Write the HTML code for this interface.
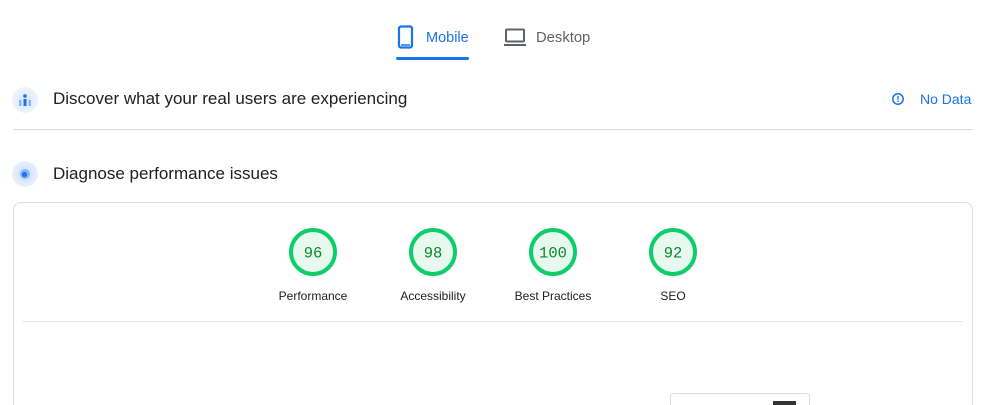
<!DOCTYPE html>
<html><head><style>
*{margin:0;padding:0;box-sizing:border-box}
html,body{width:993px;height:405px;overflow:hidden}
body{background:#fff;font-family:"Liberation Sans",Arial,sans-serif;position:relative}
#w{position:absolute;left:0;top:0;width:993px;height:405px;overflow:hidden}
.abs{position:absolute}
.t{font-size:17px;color:#202124}
.lbl{position:absolute;font-size:12px;color:#212121;width:120px;text-align:center}
</style></head><body><div id="w">
<svg class="abs" style="left:397px;top:25px" width="18" height="24" viewBox="0 0 18 24"><rect x="2" y="1.5" width="13" height="21" rx="2" fill="none" stroke="#1a73e8" stroke-width="2.2"/><line x1="4" y1="20" x2="13" y2="20" stroke="#1a73e8" stroke-width="1.5"/></svg>
<div class="abs" style="left:426px;top:30px;font-size:14.5px;color:#1a73e8">Mobile</div>
<div class="abs" style="left:396px;top:57px;width:73px;height:3px;background:#1a73e8;border-radius:2px"></div>
<svg class="abs" style="left:504px;top:28px" width="24" height="20" viewBox="0 0 24 20"><rect x="2" y="1.5" width="18" height="12" rx="1" fill="none" stroke="#5f6368" stroke-width="2"/><rect x="0" y="16" width="22" height="2" fill="#5f6368"/></svg>
<div class="abs" style="left:536px;top:30px;font-size:14.8px;color:#5f6368">Desktop</div>

<div class="abs" style="left:12px;top:87px;width:26px;height:26px;border-radius:50%;background:radial-gradient(#d6e6fb,#eef4fd 70%,#fff)"></div>
<svg class="abs" style="left:17px;top:93px" width="16" height="14" viewBox="0 0 16 14"><circle cx="8" cy="3" r="1.8" fill="#1a73e8"/><rect x="6.5" y="6" width="3" height="7" fill="#1a73e8"/><rect x="2" y="7" width="2.5" height="6" fill="#8ab4f8"/><rect x="11.5" y="7" width="2.5" height="6" fill="#8ab4f8"/></svg>
<div class="abs t" style="left:53px;top:89px">Discover what your real users are experiencing</div>
<svg class="abs" style="left:891px;top:92px" width="14" height="14" viewBox="0 0 14 14"><circle cx="7" cy="7" r="5.2" fill="none" stroke="#1a73e8" stroke-width="1.5"/><rect x="6.3" y="4" width="1.4" height="3.6" fill="#1a73e8"/><rect x="6.3" y="8.6" width="1.4" height="1.4" fill="#1a73e8"/></svg>
<div class="abs" style="left:920px;top:91px;font-size:14px;color:#1a73e8">No Data</div>
<div class="abs" style="left:13px;top:129px;width:960px;height:1px;background:#dadce0"></div>

<div class="abs" style="left:12px;top:161px;width:26px;height:26px;border-radius:50%;background:radial-gradient(#c5dafa,#eaf1fd 70%,#fff)"></div>
<svg class="abs" style="left:17px;top:166px" width="16" height="16" viewBox="0 0 16 16"><circle cx="8" cy="8" r="5" fill="#8ab4f8"/><circle cx="7.5" cy="8.5" r="2.6" fill="#1a73e8"/></svg>
<div class="abs t" style="left:53px;top:164px">Diagnose performance issues</div>

<div class="abs" style="left:13px;top:202px;width:960px;height:240px;border:1px solid #dadce0;border-radius:8px"></div>
<div class="abs" style="left:22px;top:321px;width:941px;height:1px;background:#e6e6e6"></div>
<div class="abs" style="left:670px;top:393px;width:140px;height:30px;border:1px solid #dadce0;border-radius:3px"></div>
<div class="abs" style="left:773px;top:401px;width:23px;height:8px;background:#333"></div>

<svg class="abs" style="left:0;top:0" width="993" height="405">
<g font-family="Liberation Mono,monospace" font-size="15.5" fill="#0a8a2e" text-anchor="middle">
<g transform="translate(313,252)"><circle r="22" fill="#e7f8ee" stroke="#0cce6b" stroke-width="4"/><text y="5.5">96</text></g>
<g transform="translate(433,252)"><circle r="22" fill="#e7f8ee" stroke="#0cce6b" stroke-width="4"/><text y="5.5">98</text></g>
<g transform="translate(553,252)"><circle r="22" fill="#e7f8ee" stroke="#0cce6b" stroke-width="4"/><text y="5.5">100</text></g>
<g transform="translate(673,252)"><circle r="22" fill="#e7f8ee" stroke="#0cce6b" stroke-width="4"/><text y="5.5">92</text></g>
</g></svg>
<div class="lbl" style="left:253px;top:289px">Performance</div>
<div class="lbl" style="left:373px;top:289px">Accessibility</div>
<div class="lbl" style="left:493px;top:289px">Best Practices</div>
<div class="lbl" style="left:613px;top:289px">SEO</div>
</div></body></html>
